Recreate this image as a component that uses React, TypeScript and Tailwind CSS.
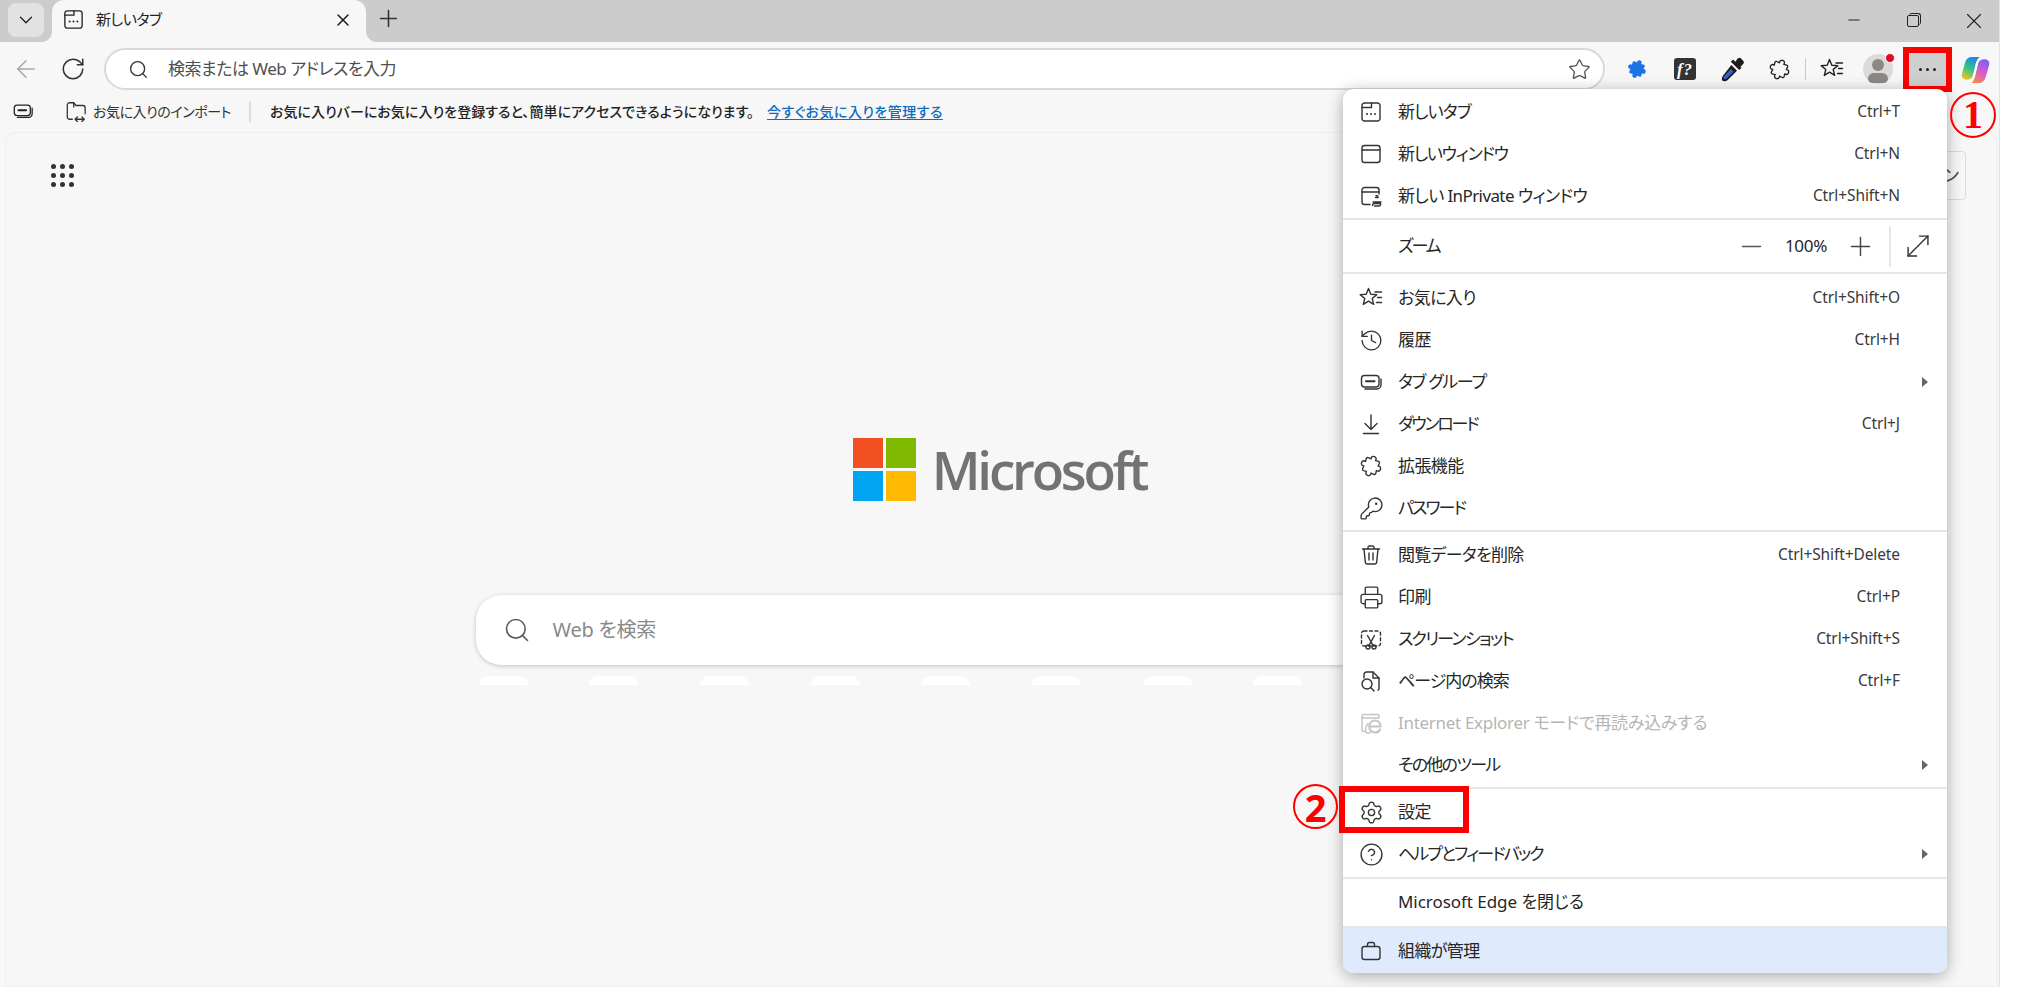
import React from "react";
import { ArrowLeft, RotateCw, Search, Star, ChevronDown, X, Plus, Minus, MoveDiagonal, History, KeyRound, Printer, Settings, CircleHelp } from "lucide-react";

type P = { className?: string; strokeWidth?: number };
const PUZZLE = "M9.600 5.400C9 3 10.500 2 12 2s3 1 2.400 3.400l3.100-.3c1 0 1.500.5 1.500 1.500l-.300 3C21 9 22 10.500 22 12s-1 3-3.300 2.400l.300 3c0 1-.5 1.500-1.500 1.500l-3.100-.3C15 21 13.500 22 12 22s-3-1-2.400-3.400l-3.100.3c-1 0-1.500-.5-1.500-1.500l.300-3C3 15 2 13.500 2 12s1-3 3.300-2.400l-.300-3c0-1 .5-1.500 1.500-1.500z";
const S = ({ className, children }: P & { children: React.ReactNode }) => (
  <svg viewBox="0 0 24 24" fill="none" stroke="currentColor" strokeWidth="1.4" strokeLinecap="round" strokeLinejoin="round" className={className}>{children}</svg>
);
const NewTabIcon = ({ className }: P) => (
  <S className={className}><path d="M5.500 3h13A2.500 2.500 0 0 1 21 5.500v13a2.500 2.500 0 0 1-2.500 2.500h-13A2.500 2.500 0 0 1 3 18.500v-13A2.500 2.500 0 0 1 5.500 3z" /><path d="M3 7.500h9.500V3" /><path d="M8 14h.01M12 14h.01M16 14h.01" strokeWidth="2" /></S>
);
const WindowIcon = ({ className }: P) => (
  <S className={className}><rect x="3" y="3.500" width="18" height="17" rx="2.500" /><path d="M3 8h18" /></S>
);
const PrivateIcon = ({ className }: P) => (
  <S className={className}><path d="M11 20.500H5.500A2.500 2.500 0 0 1 3 18V6a2.500 2.500 0 0 1 2.500-2.500h12A2.500 2.500 0 0 1 20 6v4" /><path d="M3 8h17" /><path d="M17 11.500a2 2 0 0 1 2 2h-2.500M14 18h8M13.500 21.500c0-1.500 1-2 2-2h6c.5 1.500-.5 2.500-2 2.500h-4" /></S>
);
const FavIcon = ({ className }: P) => (
  <S className={className}><path d="M9.500 2.500l2.300 5.700 6 .4-4.600 3.900 1.500 5.900-5.200-3.200-5.200 3.200 1.500-5.900L1.200 8.600l6-.4z" /><path d="M16 6h6.500M18.500 11.500h4M17.500 16.500h5" /></S>
);
const TabGroupIcon = ({ className }: P) => (
  <S className={className}><rect x="2.500" y="5.500" width="17.500" height="11.500" rx="3" /><path d="M7 11.200h8.500" strokeWidth="2" /><path d="M22 9v6a4 4 0 0 1-4 4H6" /></S>
);
const DownloadIcon = ({ className }: P) => (
  <S className={className}><path d="M12 3v14M6 11.500l6 6 6-6M4.500 21.500h15" /></S>
);
const PuzzleIcon = ({ className }: P) => (<S className={className}><path d={PUZZLE} transform="rotate(20 12 12)" /></S>);
const TrashIcon = ({ className }: P) => (
  <S className={className}><path d="M3.500 6h17M9 5.800V4.500A1.500 1.500 0 0 1 10.500 3h3A1.500 1.500 0 0 1 15 4.500v1.300" /><path d="M5 6l1.300 13a2.200 2.200 0 0 0 2.200 2h7a2.200 2.200 0 0 0 2.200-2L19 6" /><path d="M10 10v7M14 10v7" /></S>
);
const ShotIcon = ({ className }: P) => (
  <S className={className}><rect x="2.500" y="4" width="19" height="15" rx="2.500" strokeDasharray="3 2.500" /><circle cx="9" cy="20" r="2" /><circle cx="15" cy="20" r="2" /><path d="M8.500 8.500l5.500 9.800M15.500 8.500L10 18.300" /></S>
);
const FindIcon = ({ className }: P) => (
  <S className={className}><path d="M5 9V5.500A2.500 2.500 0 0 1 7.500 3H14l6 6v10.500a2 2 0 0 1-1 1.700" /><path d="M14 3v6h6" /><circle cx="8" cy="15" r="5" /><path d="M11.700 18.500l3.300 3.500" /></S>
);
const IEIcon = ({ className }: P) => (
  <S className={className}><path d="M6 20.500H4.500A1.500 1.500 0 0 1 3 19V5A1.500 1.500 0 0 1 4.500 3.500h14A1.500 1.500 0 0 1 20 5v1.500" /><path d="M3 7h17" /><path d="M10.500 15.500h11c0-3.500-2.200-6-5.500-6s-5.700 2.500-5.700 6 2.400 6 5.700 6c2.300 0 4-1 5-3" strokeWidth="2.200" /><path d="M9 12.500C6 16 5.500 21 8 22c1.500.5 3-.3 4-1.500" /></S>
);
const CaseIcon = ({ className }: P) => (
  <S className={className}><rect x="3" y="7.500" width="18" height="13" rx="2.500" /><path d="M8.500 7.500v-2a2 2 0 0 1 2-2h3a2 2 0 0 1 2 2v2" /></S>
);
const ImportIcon = ({ className }: P) => (
  <S className={className}><path d="M8 21H5a2.500 2.500 0 0 1-2.500-2.500v-13A2.500 2.500 0 0 1 5 3h4.500l2.500 3h7.500A2.500 2.500 0 0 1 22 8.500V15" /><path d="M9.500 7.500V3" /><path d="M11 21h10M13.500 18.500L11 21l2.500 2.500M18.500 18.500L21 21l-2.500 2.500" /></S>
);
const Dropper = () => (
  <svg viewBox="0 0 24 24" className="w-[27px] h-[27px]">
    <path d="M14.500 5l2-2.500a2.300 2.300 0 0 1 3.300 0l1.500 1.500a2.300 2.300 0 0 1 0 3.300L19 9.500l1 1-2 2-7.500-7.500 2-2z" fill="#1b1b1b" />
    <path d="M11 8l5 5-8.500 8.500c-1 1-3 1.200-4.500.5-.7-1.300-.5-3.300.5-4.500z" fill="#1b1b1b" />
    <path d="M10.500 11.500l2.500 2.500-6.500 6.200c-.7.500-1.700.5-2.300.1-.3-.7-.2-1.500.3-2.200z" fill="#3d5fc4" />
  </svg>
);
const Copilot = () => (
  <svg viewBox="0 0 32 32" className="w-[31px] h-[31px]">
    <defs>
      <linearGradient id="cA" x1="0.6" y1="0" x2="0.2" y2="1"><stop offset="0" stopColor="#1d86ea" /><stop offset="0.5" stopColor="#2fc48a" /><stop offset="1" stopColor="#f6c51e" /></linearGradient>
      <linearGradient id="cB" x1="0.8" y1="0" x2="0.3" y2="1"><stop offset="0" stopColor="#7b5cf2" /><stop offset="0.55" stopColor="#dc5ccf" /><stop offset="1" stopColor="#f5894a" /></linearGradient>
    </defs>
    <path d="M12 3h9c-2 .5-3 2-3.500 4L14 21c-1 3.500-3.500 5.500-7 5.500-4 0-6-2.500-5-6L5.500 8C6.500 5 9 3 12 3z" fill="url(#cA)" />
    <path d="M20 30h-9c2-.5 3-2 3.500-4L18 11c1-3.500 3.500-5.500 7-5.500 4 0 6 2.500 5 6L26.500 24C25.500 27 23 30 20 30z" fill="url(#cB)" />
    <path d="M17.800 8.500L14.200 23.500" stroke="#ffffff" strokeWidth="2.400" strokeLinecap="round" />
  </svg>
);
const Msft = () => (
  <div className="grid grid-cols-[30px_30px] grid-rows-[30px_30px] gap-[3px]">
    <div className="bg-[#f25022]" /><div className="bg-[#7fba00]" /><div className="bg-[#00a4ef]" /><div className="bg-[#ffb900]" />
  </div>
);

type Row = { icon?: React.ComponentType<P>; label: string; key?: string; arrow?: boolean; off?: boolean; t: string; big?: boolean };
const groups: { cls: string; rows: Row[] }[] = [
  { cls: "pt-[2px] pb-[1px]", rows: [
    { icon: NewTabIcon, label: "新しいタブ", key: "Ctrl+T", t: "tracking-[-0.9px]" },
    { icon: WindowIcon, label: "新しいウィンドウ", key: "Ctrl+N", t: "tracking-[-1.25px]" },
    { icon: PrivateIcon, label: "新しい InPrivate ウィンドウ", key: "Ctrl+Shift+N", t: "tracking-[-0.6px]" },
  ]},
  { cls: "pt-[3px] pb-[1px]", rows: [
    { icon: FavIcon, label: "お気に入り", key: "Ctrl+Shift+O", t: "tracking-[-0.6px]" },
    { icon: History, label: "履歴", key: "Ctrl+H", t: "tracking-[-0.6px]", big: true },
    { icon: TabGroupIcon, label: "タブ グループ", arrow: true, t: "tracking-[-1.3px]" },
    { icon: DownloadIcon, label: "ダウンロード", key: "Ctrl+J", t: "tracking-[-2.2px]" },
    { icon: PuzzleIcon, label: "拡張機能", t: "tracking-[-0.6px]" },
    { icon: KeyRound, label: "パスワード", t: "tracking-[-1.9px]", big: true },
  ]},
  { cls: "pt-[2px] pb-[1px]", rows: [
    { icon: TrashIcon, label: "閲覧データを削除", key: "Ctrl+Shift+Delete", t: "tracking-[-0.7px]" },
    { icon: Printer, label: "印刷", key: "Ctrl+P", t: "tracking-[-0.6px]", big: true },
    { icon: ShotIcon, label: "スクリーンショット", key: "Ctrl+Shift+S", t: "tracking-[-1.7px]" },
    { icon: FindIcon, label: "ページ内の検索", key: "Ctrl+F", t: "tracking-[-1px]" },
    { icon: IEIcon, label: "Internet Explorer モードで再読み込みする", off: true, t: "tracking-[-0.3px]" },
    { label: "その他のツール", arrow: true, t: "tracking-[-1.7px]" },
  ]},
  { cls: "pt-[2px] pb-[2px]", rows: [
    { icon: Settings, label: "設定", t: "tracking-[-0.6px]", big: true },
    { icon: CircleHelp, label: "ヘルプとフィードバック", arrow: true, t: "tracking-[-1.9px]", big: true },
  ]},
  { cls: "pt-[2px] pb-[3px]", rows: [{ label: "Microsoft Edge を閉じる", t: "tracking-[-0.05px]" }] },
];

const MenuRow = ({ r }: { r: Row }) => {
  const I = r.icon;
  return (
    <div className={`flex items-center h-[42px] pl-[17px] pr-[47px] ${r.off ? "text-[#b5b5b5]" : "text-[#262626]"}`}>
      <div className="w-[22px] h-[22px] flex items-center justify-center mr-[16px]">
        {I && <I strokeWidth={1.3} className={`shrink-0 ${r.big ? "w-[25px] h-[25px]" : "w-[24px] h-[24px]"} ${r.off ? "text-[#c4c4c4]" : "text-[#333333]"}`} />}
      </div>
      <span className={`text-[17px] whitespace-nowrap ${r.t}`}>{r.label}</span>
      {r.key && <span className="ml-auto text-[15.5px] tracking-[-0.1px] text-[#3a3a3a]">{r.key}</span>}
      {r.arrow && <span className="ml-auto -mr-[28px] w-0 h-0 border-y-[5px] border-y-transparent border-l-[6px] border-l-[#666666]" />}
    </div>
  );
};

const Menu = () => (
  <div className="absolute left-[1343px] top-[89px] w-[604px] h-[884px] bg-white rounded-[10px] shadow-[0_3px_16px_rgba(0,0,0,0.32)] flex flex-col">
    <div className={`${groups[0].cls} border-b-2 border-[#e6e6e6]`}>{groups[0].rows.map((r) => <MenuRow key={r.label} r={r} />)}</div>
    <div className="flex items-center h-[54px] pl-[55px] pr-[12px] border-b-2 border-[#e6e6e6] text-[#262626]">
      <span className="text-[17px] tracking-[-2.2px]">ズーム</span>
      <Minus className="ml-auto w-[31px] h-[31px] text-[#555555]" strokeWidth={1.1} />
      <span className="text-[17px] ml-[18px] mr-[18px] tracking-[-0.3px]">100%</span>
      <Plus className="w-[31px] h-[31px] text-[#444444]" strokeWidth={1.1} />
      <div className="w-[2px] h-[41px] bg-[#e6e6e6] ml-[13px] mr-[10px]" />
      <MoveDiagonal className="w-[34px] h-[34px] text-[#333333]" strokeWidth={1} />
    </div>
    {groups.slice(1).map((g) => (
      <div key={g.rows[0].label} className={`${g.cls} border-b-2 border-[#e6e6e6]`}>
        {g.rows.map((r) => <MenuRow key={r.label} r={r} />)}
      </div>
    ))}
    <div className="flex-1 flex items-center pl-[17px] bg-[#dfebfc] rounded-b-[10px] text-[#262626]">
      <div className="w-[22px] h-[22px] flex items-center justify-center mr-[16px]"><CaseIcon className="shrink-0 w-[24px] h-[24px] text-[#333333]" /></div>
      <span className="text-[17px] tracking-[-0.6px]">組織が管理</span>
    </div>
  </div>
);

export default function App() {
  return (
    <div className="relative w-[2029px] h-[987px] overflow-hidden bg-white font-['Noto_Sans','Noto_Sans_CJK_JP',sans-serif] [font-feature-settings:'palt']">
      <div className="w-[2000px] h-[987px] flex flex-col bg-[#f7f7f7] border-r border-[#e4e4e4]">
        {/* tab strip */}
        <div className="h-[42px] shrink-0 bg-[#cccccc] flex items-start pl-[8px]">
          <div className="mt-[3px] w-[36px] h-[34px] rounded-[8px] bg-[#e2e2e2] flex items-center justify-center">
            <ChevronDown className="w-[22px] h-[22px] text-[#222222]" strokeWidth={1.4} />
          </div>
          <div className="relative ml-[8px] w-[314px] h-[42px] bg-[#f7f7f7] rounded-t-[12px] flex items-center pl-[10px] pr-[12px]">
            <div className="absolute -left-[10px] bottom-0 w-[10px] h-[10px] bg-[radial-gradient(circle_at_0_0,transparent_9.5px,#f7f7f7_10px)]" />
            <div className="absolute -right-[10px] bottom-0 w-[10px] h-[10px] bg-[radial-gradient(circle_at_100%_0,transparent_9.5px,#f7f7f7_10px)]" />
            <NewTabIcon className="w-[23px] h-[23px] text-[#222222] -mt-[3px]" />
            <span className="ml-[11px] text-[15px] tracking-[-0.5px] text-[#222222] -mt-[3px]">新しいタブ</span>
            <X className="ml-auto mr-[1px] w-[20px] h-[20px] text-[#1b1b1b] -mt-[3px]" strokeWidth={1.8} />
          </div>
          <Plus className="ml-[9px] mt-[5px] w-[27px] h-[27px] text-[#333333]" strokeWidth={1.4} />
          <div className="ml-auto flex items-start pr-[17px]">
            <Minus className="mt-[11px] w-[18px] h-[18px] text-[#222222]" strokeWidth={1.3} />
            <div className="ml-[44px] mt-[13px] relative w-[14px] h-[14px]">
              <div className="absolute left-[2px] top-0 w-[12px] h-[12px] rounded-[3px] border-t-[1.5px] border-r-[1.5px] border-[#222222]" />
              <div className="absolute left-0 top-[2px] w-[12px] h-[12px] rounded-[2px] border-[1.5px] border-[#222222]" />
            </div>
            <X className="ml-[40px] mt-[8px] w-[26px] h-[26px] -mr-[5px] text-[#222222]" strokeWidth={1} />
          </div>
        </div>
        {/* toolbar */}
        <div className="h-[48px] shrink-0 flex items-center pl-[12px] pt-[6px]">
          <ArrowLeft className="w-[28px] h-[28px] text-[#a8a8a8]" strokeWidth={1.3} />
          <RotateCw className="ml-[20px] w-[26px] h-[26px] text-[#333333]" strokeWidth={1.4} />
          <div className="ml-[18px] w-[1501px] h-[42px] rounded-full bg-white border-2 border-[#d9d9d9] flex items-center pl-[22px] pr-[12px]">
            <Search className="w-[21px] h-[21px] text-[#333333]" strokeWidth={1.5} />
            <span className="ml-[19px] text-[17px] tracking-[-0.5px] text-[#4f4f4f]">検索または Web アドレスを入力</span>
            <Star className="ml-auto w-[23px] h-[23px] text-[#555555]" strokeWidth={1.4} />
          </div>
          <div className="ml-[20px] w-[24px] flex justify-center">
            <svg viewBox="0 0 24 24" className="w-[22px] h-[22px]"><path d={PUZZLE} fill="#1a73e8" transform="rotate(20 12 12)" /></svg>
          </div>
          <div className="ml-[25px] w-[22px] h-[22px] rounded-[3px] bg-[#333333] flex items-center justify-center text-white italic font-bold text-[17px] tracking-[1px] leading-none font-['Liberation_Serif',serif]">f?</div>
          <div className="ml-[23px] w-[27px] flex justify-center"><Dropper /></div>
          <div className="ml-[21px] w-[24px] flex justify-center"><PuzzleIcon className="w-[23px] h-[23px] text-[#222222]" /></div>
          <div className="ml-[14px] w-px h-[22px] bg-[#c8c8c8]" />
          <FavIcon className="ml-[14px] w-[24px] h-[24px] text-[#222222]" />
          <div className="relative ml-[19px] w-[30px] h-[30px] rounded-full bg-[#dcdad6] overflow-visible">
            <div className="absolute left-[9px] top-[5px] w-[12px] h-[12px] rounded-full bg-[#8b8885]" />
            <div className="absolute left-[5px] top-[19px] w-[20px] h-[10px] rounded-t-[10px] rounded-b-[8px] bg-[#8b8885]" />
            <div className="absolute left-[22px] -top-[1px] w-[10px] h-[10px] rounded-full bg-[#e00b1c] border border-white" />
          </div>
          <div className="ml-[10px] w-[49px] h-[45px] bg-[#cfcfcf] border-[6px] border-[#ff0000] flex items-center justify-center gap-[4px]">
            <span className="w-[3px] h-[3px] rounded-full bg-[#222222]" />
            <span className="w-[3px] h-[3px] rounded-full bg-[#222222]" />
            <span className="w-[3px] h-[3px] rounded-full bg-[#222222]" />
          </div>
          <div className="ml-[8px]"><Copilot /></div>
        </div>
        {/* favorites bar */}
        <div className="h-[42px] shrink-0 flex items-center pl-[12px] text-[14px] tracking-[-0.45px]">
          <TabGroupIcon className="w-[22px] h-[22px] text-[#222222]" />
          <ImportIcon className="ml-[31px] w-[22px] h-[22px] text-[#333333]" />
          <span className="ml-[6px] text-[#333333]">お気に入りのインポート</span>
          <div className="ml-[18px] w-[2px] h-[21px] bg-[#dddddd]" />
          <span className="ml-[19px] font-medium tracking-[0.05px] text-[#222222]">お気に入りバーにお気に入りを登録すると、簡単にアクセスできるようになります。</span>
          <span className="ml-[13px] font-medium tracking-[0.45px] text-[#0f6cbd] underline underline-offset-2">今すぐお気に入りを管理する</span>
        </div>
        {/* page */}
        <div className="flex-1 ml-[5px] mr-px rounded-t-[10px] border border-[#efefef] bg-[#f7f7f7] flex flex-col">
          <div className="flex items-start justify-between pl-[45px] pr-[31px]">
            <div className="mt-[31px] grid grid-cols-3 gap-[4px]">
              {Array.from({ length: 9 }).map((_, i) => (<span key={i} className="w-[5px] h-[5px] rounded-full bg-[#333333]" />))}
            </div>
            <div className="mt-[18px] w-[110px] h-[49px] rounded-[4px] border border-[#dcdcdc] flex items-center justify-end pr-[6px] text-[18px] text-[#444444]">サインイン</div>
          </div>
          <div className="flex flex-col items-center mt-[238px] pr-[4px]">
            <div className="flex items-center">
              <Msft />
              <span className="ml-[16px] text-[53px] leading-[63px] font-semibold tracking-[-3.2px] text-[#737373] font-['Open_Sans',sans-serif]">Microsoft</span>
            </div>
            <div className="mt-[94px] w-[1048px] h-[70px] rounded-[25px] bg-white shadow-[0_1px_4px_rgba(0,0,0,0.22)] flex items-center pl-[27px]">
              <Search className="w-[28px] h-[28px] text-[#5c5c5c]" strokeWidth={1.4} />
              <span className="ml-[22px] text-[20px] tracking-[-0.3px] text-[#8a8a8a]">Web を検索</span>
            </div>
            <div className="mt-[11px] w-[1048px] flex gap-[61.7px] px-[3px]">
              {Array.from({ length: 8 }).map((_, i) => (<div key={i} className="w-[49px] h-[9px] bg-white rounded-t-[16px]" />))}
            </div>
          </div>
        </div>
      </div>

      <Menu />

      {/* annotations */}
      <div className="absolute left-[1950px] top-[92px] w-[46px] h-[46px] rounded-full border-2 border-[#ff0000] flex items-center justify-center text-[40px] leading-none font-bold text-[#ff0000] font-['Liberation_Serif',serif]">1</div>
      <div className="absolute left-[1293px] top-[784px] w-[45px] h-[45px] rounded-full border-2 border-[#ff0000] flex items-center justify-center text-[38px] leading-none font-bold text-[#ff0000]">2</div>
      <div className="absolute left-[1339px] top-[786px] w-[130px] h-[47px] border-[6px] border-[#ff0000]" />
    </div>
  );
}
